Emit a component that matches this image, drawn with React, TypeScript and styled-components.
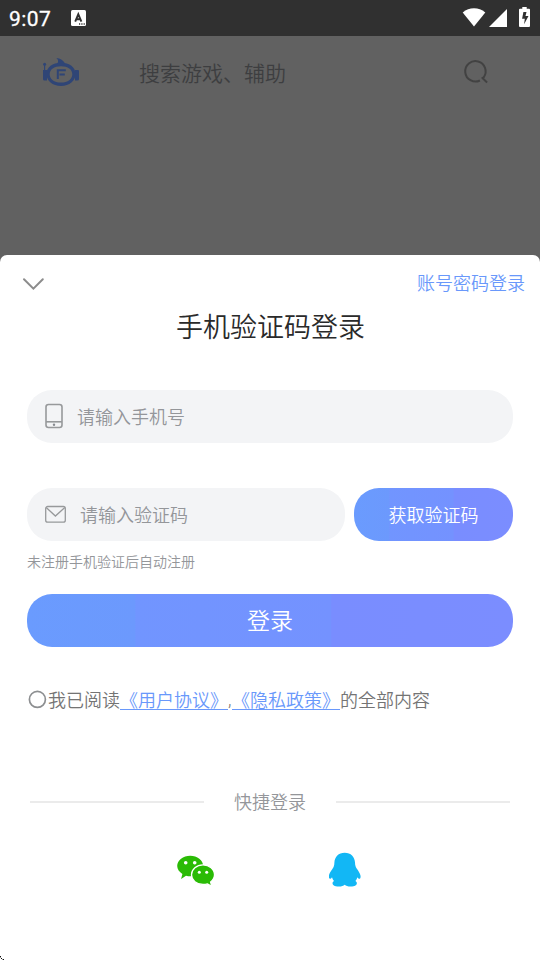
import React from 'react';
import styled, { createGlobalStyle } from 'styled-components';

const GlobalStyle = createGlobalStyle`
  * { box-sizing: border-box; }
  html, body, #root { margin: 0; padding: 0; }
  body {
    background: #616161;
    font-family: Roboto, 'Noto Sans CJK SC', sans-serif;
    font-weight: 350;
    overflow: hidden;
  }
  button { font: inherit; border: 0; padding: 0; background: none; }
  svg { display: block; flex: none; }
`;

const Screen = styled.main`
  position: relative;
  width: 540px;
  height: 960px;
  display: flex;
  flex-direction: column;
  background: #616161;
  overflow: hidden;
`;

const StatusBar = styled.header`
  height: 36px;
  flex: none;
  display: flex;
  align-items: center;
  padding: 0 10px 0 9px;
  background: #303030;
  color: #fff;
`;

const Clock = styled.span`
  width: 62px;
  font: 400 21px/36px Roboto, sans-serif;
  letter-spacing: 0.4px;
  padding-top: 1px;
  -webkit-text-stroke: 0.3px #fff;
`;

const StatusIcons = styled.div`
  margin-left: auto;
`;

const TopBar = styled.div`
  height: 219px;
  flex: none;
  display: flex;
  align-items: flex-start;
  padding: 20px 52px 0 42px;
`;

const SearchHint = styled.span`
  flex: 1;
  margin-left: 59px;
  padding-top: 3px;
  font-size: 21px;
  line-height: 30px;
  color: #3d3e40;
`;

const Sheet = styled.section`
  flex: 1;
  display: flex;
  flex-direction: column;
  background: #fff;
  border-radius: 7px 7px 0 0;
  padding: 0 27px;
`;

const SheetHeader = styled.div`
  display: flex;
  justify-content: space-between;
  height: 52px;
  margin: 0 -12px 0 -5px;
  padding-top: 15px;
`;

const CloseButton = styled.button`
  height: 28px;
`;

const ModeLink = styled.button`
  height: 28px;
  line-height: 28px;
  font-size: 18px;
  color: #6998fb;
`;

const Title = styled.h1`
  margin: 0;
  height: 83px;
  padding-left: 1px;
  text-align: center;
  font-size: 27px;
  line-height: 42px;
  font-weight: 350;
  color: #2a2a2a;
`;

const Row = styled.div<{ $gap: number }>`
  display: flex;
  gap: 9px;
  margin-bottom: ${(p) => p.$gap}px;
`;

const Field = styled.label`
  flex: 1;
  height: 53px;
  display: flex;
  align-items: center;
  gap: 13px;
  padding: 0 0 2px 17px;
  border-radius: 25px;
  background: #f3f4f6;
  font-size: 18px;
  color: #94969a;
`;

const PillButton = styled.button<{ $width: number; $size: number }>`
  width: ${(p) => p.$width}px;
  height: 53px;
  flex: none;
  padding-bottom: ${(p) => (p.$size > 20 ? 4 : 2)}px;
  border-radius: 25px;
  background: linear-gradient(
    90deg,
    #6a9bfe 0%,
    #6c99fd 22.2%,
    #7195ff 22.4%,
    #7492ff 62.5%,
    #798dff 62.7%,
    #7b8dff 100%
  );
  color: #fff;
  font-size: ${(p) => p.$size}px;
`;

const Hint = styled.p`
  margin: 0;
  height: 42px;
  font-size: 14px;
  line-height: 20px;
  color: #94969a;
`;

const Agreement = styled.div`
  display: flex;
  align-items: center;
  height: 28px;
  margin: 38px 0 74px;
  font-size: 18px;
  color: #747474;
  white-space: nowrap;
`;

const RadioIcon = styled.svg`
  margin-right: 1px;
`;

const Comma = styled.span`
  width: 4px;
`;

const PolicyLink = styled.a`
  color: #6998fb;
  text-decoration: underline;
  text-decoration-thickness: 1px;
  text-underline-offset: 2px;
  text-decoration-skip-ink: none;
`;

const Divider = styled.div`
  display: flex;
  align-items: center;
  gap: 30px;
  height: 28px;
  margin: 0 3px;
  font-size: 18px;
  color: #94969a;

  &::before,
  &::after {
    content: '';
    flex: 1;
    height: 2px;
    margin-top: 2px;
    background: #ebebeb;
  }
`;

const QuickLogins = styled.div`
  display: flex;
  justify-content: center;
  gap: 114px;
  padding: 37px 3px 0;
`;

const CornerMark = styled.svg`
  position: absolute;
  left: 0;
  bottom: 0;
`;

const KeyboardNotice = () => (
  <svg width="15" height="16" viewBox="0 0 15 16">
    <rect width="15" height="16" rx="1.5" fill="#fff" />
    <path d="M4.200 11.600 7.300 4.300l3.100 7.300M5.200 9.200h4.200" fill="none" stroke="#303030" strokeWidth="1.900" />
    <path d="M8 14h1.200M10.300 14h1.200M12.600 14h1.200" stroke="#303030" strokeWidth="1.400" />
  </svg>
);

const SystemIcons = () => (
  <svg width="68" height="22" viewBox="0 0 68 22">
    <path d="M.7 6C4.200 2.900 7.800 1.800 12 1.800S19.800 2.900 23.300 6L12 20Z" transform="translate(0 -.5)" fill="#fff" />
    <path d="M27 20 45 2v18Z" fill="#fff" />
    <path d="M60.300 0h4.400v1.800H67q1 0 1 1V19q0 1-1 1h-9q-1 0-1-1V2.800q0-1 1-1h2.300Z" fill="#fff" />
    <path d="M61.400 5h3.100l-1 4h3l-4.400 8.300.7-5.500h-2.700Z" fill="#303030" />
  </svg>
);

const Logo = () => (
  <svg width="38" height="32" viewBox="0 0 38 32">
    <path fill="#2f4576" fillRule="evenodd" d="M19 6.800c8.500 0 14.500 4.400 14.500 11.300S27.500 30 19 30 4.500 25 4.500 18.100 10.500 6.800 19 6.800Zm0 3.500c-7 0-11.300 3.100-11.300 7.900S12 26.500 19 26.500s11.300-3.500 11.300-8.300S26 10.300 19 10.300Z" />
    <path fill="#2f4576" d="M14.300 2c4 .4 7.400 2.500 9.200 6H15c1.800-2.500 1.400-4.500-.7-6ZM1 14h4v10.500H2.500Q1 24.500 1 23ZM33 14h3q1 0 1 1v8q0 1.500-1.500 1.500H33ZM2 8.500h1.200V15H2Z" />
    <circle cx="2.600" cy="8.300" r="1.500" fill="#2f4576" />
    <path d="M15.800 23v-8.800h8M17.500 18.500h5.300" fill="none" stroke="#2f4576" strokeWidth="2" />
  </svg>
);

const SearchIcon = () => (
  <svg width="26" height="32" viewBox="0 0 26 32">
    <path d="M17.500 24.500A10.200 10.200 0 1 1 21.300 21.300l-1.300.7 4.700 4.400" transform="translate(.4 0)" fill="none" stroke="#424242" strokeWidth="2" strokeLinejoin="round" />
  </svg>
);

const ChevronDown = () => (
  <svg width="24" height="28" viewBox="0 0 24 28">
    <path d="m2 9.200 9.400 9.400L20.800 9.200" fill="none" stroke="#8c8c8c" strokeWidth="2" strokeLinecap="round" />
  </svg>
);

const PhoneIcon = () => (
  <svg width="20" height="26" viewBox="0 0 20 26">
    <g fill="none" stroke="#97999b" strokeWidth="1.600">
      <rect x="2" y="1.500" width="16" height="23" rx="2.500" />
      <path d="M2 18.800h16" />
    </g>
    <circle cx="10" cy="21.700" r="1.200" fill="#888b90" />
  </svg>
);

const MailIcon = () => (
  <svg width="23" height="18" viewBox="0 0 23 18">
    <g fill="none" stroke="#97999b" strokeWidth="1.300">
      <rect x="1.700" y="1.500" width="19.600" height="15.700" rx="2" />
      <path d="m2.200 2.500 9.200 8.500 9.400-8.500" />
    </g>
  </svg>
);

const Radio = () => (
  <RadioIcon width="20" height="20" viewBox="0 0 20 20">
    <circle cx="10.400" cy="10.400" r="8" fill="none" stroke="#8d8f91" strokeWidth="1.700" />
  </RadioIcon>
);

const WechatIcon = () => (
  <svg width="38" height="34" viewBox="0 0 38 34">
    <path fill="#2abb05" d="M13.200 3.800c7 0 13 4.400 13 10.300s-6 10.200-13 10.200q-2.200 0-4.200-.5l-4.900 3.100 1.300-5C2.300 20 .2 17.300.2 14.100.2 8.200 6.200 3.800 13.200 3.800Z" />
    <path fill="#2abb05" stroke="#fff" strokeWidth="1.300" d="M26 12.900c6.300 0 11.500 4.100 11.500 9.900 0 2.900-1.500 5.300-3.900 7.100l1.200 4.300-4.300-2.300c-1.400.4-2.900.6-4.500.6-6.300 0-11.500-4.300-11.500-9.700s5.200-9.900 11.500-9.900Z" />
    <g fill="#fff">
      <circle cx="8.700" cy="10.800" r="1.800" />
      <circle cx="17.700" cy="10.800" r="1.800" />
      <circle cx="22.300" cy="20.200" r="1.500" />
      <circle cx="29.700" cy="20.200" r="1.500" />
    </g>
  </svg>
);

const QQIcon = () => (
  <svg width="34" height="36" viewBox="0 0 34 36">
    <path fill="#12b7f5" d="M15.700.7c6.200 0 10 4.200 10.300 9.800 0 1.500.2 3 .8 4.500 1.700 3 4.800 6.500 4.800 9.500 0 2.500-1.500 3.300-3.200.8-.3 1.500-1 2.700-2 3.700 2.600 1.300 2.200 5.500-4.800 5.500-2.800 0-4.700-.6-5.900-1.800-1.200 1.200-3.100 1.800-5.900 1.800-7 0-7.400-4.200-4.800-5.500-1-1-1.700-2.200-2-3.700C1.300 27.800-.2 27-.2 24.500c0-3 3.100-6.500 4.800-9.500.6-1.500.8-3 .8-4.500C5.700 4.900 9.500.7 15.700.7Z" />
  </svg>
);

export default function App() {
  return (
    <>
      <GlobalStyle />
      <Screen>
        <StatusBar>
          <Clock>9:07</Clock>
          <KeyboardNotice />
          <StatusIcons><SystemIcons /></StatusIcons>
        </StatusBar>
        <TopBar>
          <Logo />
          <SearchHint>搜索游戏、辅助</SearchHint>
          <SearchIcon />
        </TopBar>
        <Sheet>
          <SheetHeader>
            <CloseButton aria-label="关闭"><ChevronDown /></CloseButton>
            <ModeLink>账号密码登录</ModeLink>
          </SheetHeader>
          <Title>手机验证码登录</Title>
          <Row $gap={45}>
            <Field><PhoneIcon />请输入手机号</Field>
          </Row>
          <Row $gap={11}>
            <Field><MailIcon />请输入验证码</Field>
            <PillButton $width={159} $size={18}>获取验证码</PillButton>
          </Row>
          <Hint>未注册手机验证后自动注册</Hint>
          <PillButton $width={486} $size={23}>登录</PillButton>
          <Agreement>
            <Radio />
            我已阅读<PolicyLink>《用户协议》</PolicyLink><Comma>,</Comma><PolicyLink>《隐私政策》</PolicyLink>的全部内容
          </Agreement>
          <Divider>快捷登录</Divider>
          <QuickLogins>
            <WechatIcon />
            <QQIcon />
          </QuickLogins>
        </Sheet>
        <CornerMark width="4" height="4" viewBox="0 0 4 4">
          <path d="M0 0h1v1H0ZM1 2h1v1H1ZM3 3h1v1H3Z" fill="#111" />
          <path d="M0 1h1v1H0ZM2 3h1v1H2Z" fill="#999" />
        </CornerMark>
      </Screen>
    </>
  );
}
